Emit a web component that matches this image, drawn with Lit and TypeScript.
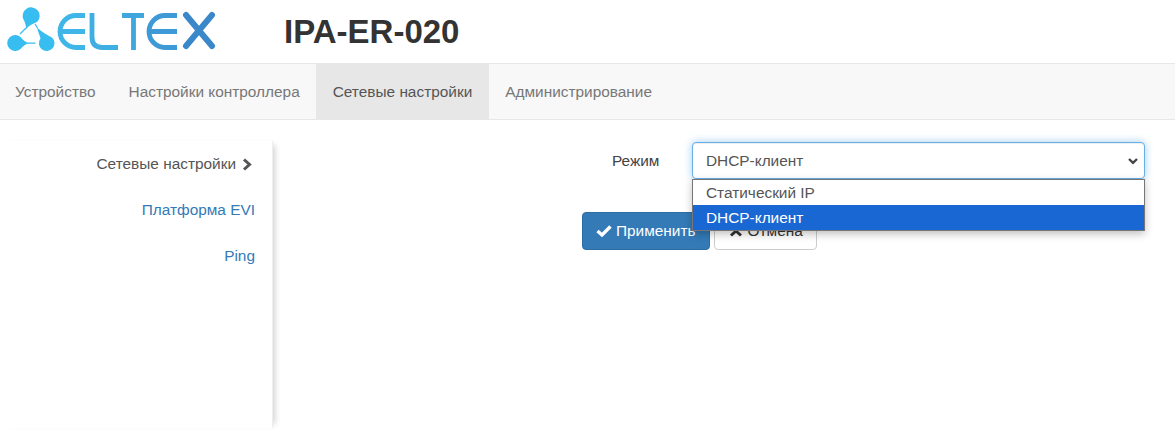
import { LitElement, html, css, svg } from "lit";
import { customElement } from "lit/decorators.js";

const logo = svg`<svg class="logo" width="230" height="60" viewBox="0 0 230 60">
  <g fill="#38bdf0">
    <path d="M23.5 19.5 A8.5 8.5 0 1 1 37.5 21.5 C33 24 29.5 25 26 29 C26 26 25.5 23 23.5 19.5 Z"/>
    <path d="M20.5 37 A8 8 0 1 0 20.5 49 C23 46 26 44 29 43.2 C26 42.5 23 40 20.5 37 Z"/>
    <path d="M40.5 38.5 A7.8 7.8 0 1 0 52 37.5 C48 35.5 42 32 37 27.5 C38 31.5 39.5 35 40.5 38.5 Z"/>
  </g>
  <path d="M26 28 L20 34 M28 43.2 H35.5 M37.5 28 L35 24" fill="none" stroke="#38bdf0" stroke-width="1.3"/>
  <path d="M85 15.5 H76 A16 16 0 0 0 76 47.5 H85 M62 31.5 H85" fill="none" stroke="#3fb5e8" stroke-width="4.8"/>
  <path d="M92 13 V37 Q92 47.5 102.5 47.5 H118" fill="none" stroke="#3eaee3" stroke-width="4.8"/>
  <path d="M122 15.5 H144 M133.5 15.5 V50" fill="none" stroke="#3fa6de" stroke-width="4.8"/>
  <path d="M177 15.5 H165 A16 16 0 0 0 165 47.5 H177 M151 31.5 H177" fill="none" stroke="#3d9ad7" stroke-width="4.8"/>
  <path d="M186 15 L212 46 M212 15 L186 46" fill="none" stroke="#3a87c9" stroke-width="6" stroke-linecap="round"/>
</svg>`;

@customElement("app-root")
export class AppRoot extends LitElement {
  static styles = css`
    :host { display: block; width: 1175px; height: 444px; overflow: hidden; background: #fff; font-family: "Liberation Sans", Arial, sans-serif; font-size: 15.4px; color: #555; }
    .top { display: flex; height: 63px; align-items: center; }
    .logo { width: 230px; height: 60px; flex: none; margin-top: -3px; }
    h1 { margin: 0 0 0 54px; font-size: 33px; font-weight: 700; color: #333; line-height: 36px; }
    nav { display: flex; height: 55px; background: #f8f8f8; border-top: 1px solid #e7e7e7; border-bottom: 1px solid #e7e7e7; padding-left: 0; }
    nav a { display: flex; align-items: center; padding: 0 16.5px; color: #777; }
    nav a:first-child { margin-left: -1.5px; }
    nav a.active { background: #e7e7e7; color: #555; }
    .body { display: flex; padding-top: 21px; }
    .side { width: 273px; height: 287px; flex: none; box-sizing: border-box; border-right: 1px solid #eee; box-shadow: 6px 0 6px -4px rgba(0,0,0,.18); display: flex; flex-direction: column; align-items: flex-end; padding: 0 17px 0 0; }
    .side a { height: 46px; display: flex; align-items: center; color: #337ab7; line-height: 20px; }
    .side a.cur { color: #555; margin-right: 3px; gap: 6px; }
    .chev { width: 10px; height: 13px; }
    .main { flex: 1; display: flex; flex-direction: column; }
    .row { display: flex; align-items: center; height: 37px; margin-top: 1px; }
    .lbl { margin-left: 339px; width: 80px; color: #444; }
    .selwrap { position: relative; }
    .select { width: 453px; height: 37px; box-sizing: border-box; border: 1px solid #66afe9; border-radius: 4px; box-shadow: inset 0 1px 1px rgba(0,0,0,.075), 0 0 8px rgba(102,175,233,.6); display: flex; align-items: center; justify-content: space-between; padding: 0 5px 0 13px; background: #fff; color: #555; }
    .caret { width: 12px; height: 8px; }
    .list { position: absolute; left: 0; top: 37px; width: 453px; box-sizing: border-box; border: 1px solid #767676; background: #fff; box-shadow: 0 3px 8px rgba(0,0,0,.25); z-index: 2; }
    .opt { height: 25px; display: flex; align-items: center; padding-left: 13px; color: #555; }
    .opt.sel { background: #1967d2; color: #fff; }
    .btns { display: flex; gap: 4px; margin: 33px 0 0 309px; }
    button { font: inherit; height: 38px; box-sizing: border-box; border-radius: 4px; border: 1px solid #ccc; background: #fff; color: #333; display: flex; align-items: center; gap: 4px; padding: 0 13px; }
    button.pri { background: #337ab7; border-color: #2e6da4; color: #fff; }
    button svg { width: 16px; height: 14px; }
  `;

  render() {
    return html`
      <div class="top">${logo}<h1>IPA-ER-020</h1></div>
      <nav>
        <a>Устройство</a><a>Настройки контроллера</a><a class="active">Сетевые настройки</a><a>Администрирование</a>
      </nav>
      <div class="body">
        <div class="side">
          <a class="cur">Сетевые настройки
            <svg class="chev" viewBox="0 0 10 13"><path d="M2 1.5 L7.5 6.5 L2 11.5" fill="none" stroke="#555" stroke-width="3"/></svg></a>
          <a>Платформа EVI</a>
          <a>Ping</a>
        </div>
        <div class="main">
          <div class="row">
            <div class="lbl">Режим</div>
            <div class="selwrap">
              <div class="select">DHCP-клиент
                <svg class="caret" viewBox="0 0 12 8"><path d="M2 2 L6 5.8 L10 2" fill="none" stroke="#444" stroke-width="2.4"/></svg></div>
              <div class="list"><div class="opt">Статический IP</div><div class="opt sel">DHCP-клиент</div></div>
            </div>
          </div>
          <div class="btns">
            <button class="pri"><svg viewBox="0 0 16 14"><path d="M1.5 7 L6 11 L14.5 2.5" fill="none" stroke="#fff" stroke-width="3.4"/></svg>Применить</button>
            <button><svg viewBox="0 0 16 14"><path d="M3 2.5 L13 11.5 M13 2.5 L3 11.5" fill="none" stroke="#333" stroke-width="3"/></svg>Отмена</button>
          </div>
        </div>
      </div>`;
  }
}
